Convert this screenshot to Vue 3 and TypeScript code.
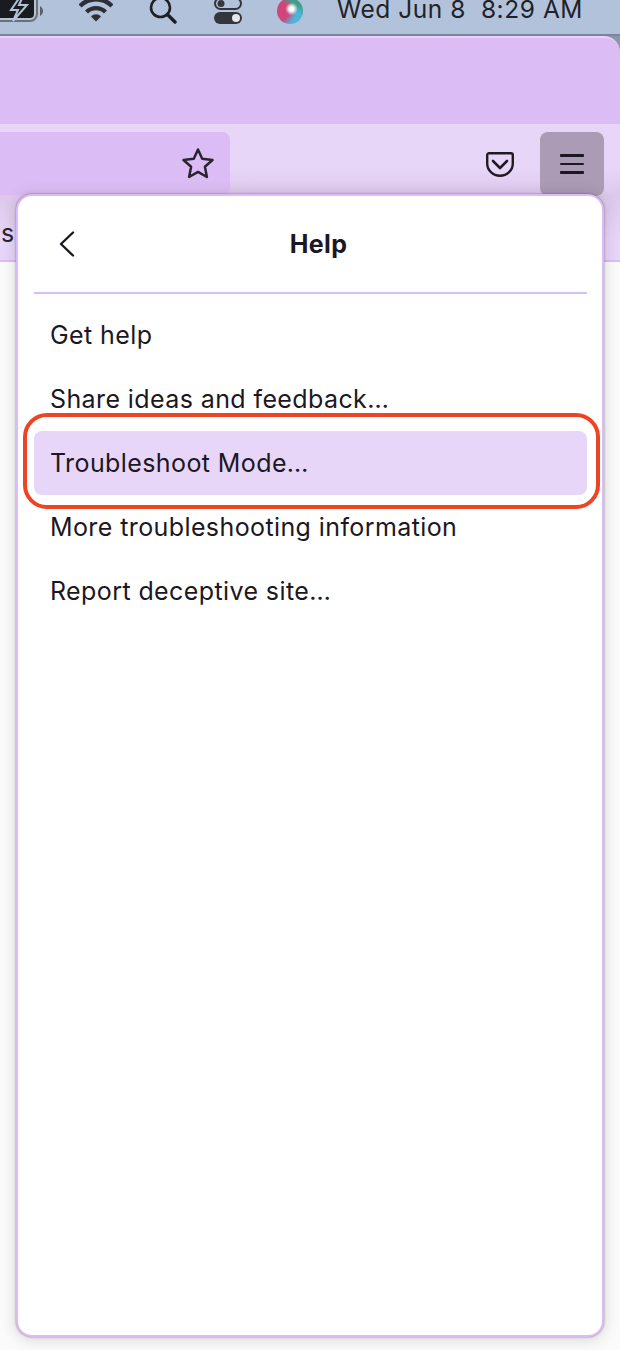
<script setup lang="ts">
// Firefox help panel, cropped from a retina mac screenshot
const items: string[] = [
  'Get help',
  'Share ideas and feedback…',
  'Troubleshoot Mode…',
  'More troubleshooting information',
  'Report deceptive site…',
];
const activeItem = 'Troubleshoot Mode…';
</script>

<template>
  <div class="screen">
    <div class="menubar">
      <svg class="mb-battery" width="44" height="24" viewBox="0 0 44 24">
        <rect x="-20" y="-8" width="57" height="29" rx="7" fill="none" stroke="#6d7176" stroke-width="2" />
        <rect x="-20" y="-5" width="54" height="23" rx="4" fill="#1a1b1f" />
        <path d="M40 6c2 1 3 3 3 5s-1 4-3 5z" fill="#5c6168" />
        <path d="M22 -6 11 10h7l-5 11 14-16h-8l5-11z" fill="#1a1b1f" stroke="#b2c2da" stroke-width="2" />
      </svg>
      <svg class="mb-wifi" width="34" height="22" viewBox="0 0 34 22">
        <path d="M1 6C10 -3 24 -3 33 6" fill="none" stroke="#2c2f35" stroke-width="4.4" />
        <path d="M7.500 12C13 6.800 21 6.800 26.500 12" fill="none" stroke="#2c2f35" stroke-width="4.4" />
        <path d="M12 16.500C15 13.500 19 13.500 22 16.500L17 21.500z" fill="#2c2f35" />
      </svg>
      <svg class="mb-search" width="28" height="24" viewBox="0 0 28 24">
        <circle cx="11.500" cy="7.500" r="9.500" fill="none" stroke="#1d1f24" stroke-width="2.600" />
        <path d="M18.500 14.500 26 22" stroke="#1d1f24" stroke-width="3.400" stroke-linecap="round" />
      </svg>
      <svg class="mb-toggle" width="30" height="25" viewBox="0 0 30 25">
        <rect x="1" y="-2" width="26" height="11" rx="5.500" fill="none" stroke="#33363b" stroke-width="2" />
        <circle cx="7" cy="3.500" r="3.500" fill="#33363b" />
        <rect x="0" y="12" width="28" height="12" rx="6" fill="#33363b" />
        <circle cx="22" cy="18" r="4" fill="#e4e8ee" />
      </svg>
      <div class="mb-siri"></div>
      <span class="mb-clock">Wed Jun 8&nbsp;&nbsp;8:29 AM</span>
    </div>

    <div class="window-top">
      <div class="titlebar"></div>
    </div>

    <div class="toolbar">
      <div class="urlbar">
        <svg width="34" height="34" viewBox="0 0 34 34">
          <path d="M17 2.500 21.200 11.800 31.500 13 23.900 19.800 25.900 30 17 24.900 8.100 30 10.100 19.800 2.500 13 12.800 11.800z" fill="none" stroke="#2b2430" stroke-width="2.500" stroke-linejoin="round" />
        </svg>
      </div>
      <div class="toolbar-right">
        <svg class="pocket" width="28" height="25" viewBox="0 0 28 25">
          <path d="M3 1.200h22a1.800 1.800 0 0 1 1.800 1.800v8.500a12.800 12.300 0 0 1-25.600 0V3A1.800 1.800 0 0 1 3 1.200z" fill="none" stroke="#1f1a24" stroke-width="2.400" />
          <path d="M7 9l7 7 7-7" fill="none" stroke="#1f1a24" stroke-width="2.600" stroke-linecap="round" stroke-linejoin="round" />
        </svg>
        <button class="hamburger" type="button" aria-label="Open menu">
          <span></span><span></span><span></span>
        </button>
      </div>
    </div>

    <div class="bookmarks"><span class="bookmark-text">sl</span></div>
    <div class="page"></div>

    <div class="panel">
      <div class="panel-head">
        <svg class="back" width="18" height="26" viewBox="0 0 18 26">
          <path d="M14 1.500 2 13l12 11.500" fill="none" stroke="#1c1722" stroke-width="2.400" stroke-linecap="round" stroke-linejoin="round" />
        </svg>
        <span class="panel-title">Help</span>
      </div>
      <div class="panel-sep"></div>
      <ul class="panel-list">
        <li v-for="item in items" :key="item" class="panel-item" :class="{ active: item === activeItem }">{{ item }}</li>
      </ul>
    </div>

    <div class="callout"></div>
  </div>
</template>

<style scoped>
.screen {
  position: relative;
  width: 620px;
  height: 1350px;
  overflow: hidden;
  font-family: Inter, "Liberation Sans", sans-serif;
  color: #1c1722;
  background: #f8f8f8;
}
.menubar {
  position: relative;
  height: 34px;
  background: #b2c2da;
  border-bottom: 2px solid #7b8498;
  overflow: hidden;
  display: flex;
  align-items: flex-start;
}
.mb-battery { flex: none; }
.mb-wifi { margin-left: 35px; flex: none; }
.mb-search { margin-left: 36px; flex: none; }
.mb-toggle { margin-left: 37px; flex: none; }
.mb-siri {
  flex: none;
  margin: -2px 0 0 33px;
  width: 26px;
  height: 26px;
  border-radius: 50%;
  background:
    radial-gradient(circle at 56% 42%, #ffffff 0 10%, rgba(255, 255, 255, 0) 30%),
    radial-gradient(circle at 12% 50%, #d0457a 0 32%, rgba(208, 69, 122, 0) 60%),
    radial-gradient(circle at 70% 92%, #4fb4d8 0 30%, rgba(79, 180, 216, 0) 58%),
    radial-gradient(circle at 72% 10%, #3fa08a 0 38%, rgba(63, 160, 138, 0) 66%),
    #4b4a6c;
}
.mb-clock {
  flex: none;
  margin: 0 0 0 34px;
  font-size: 24.500px;
  letter-spacing: 0.55px;
  line-height: 18px;
  color: #1f2228;
  white-space: nowrap;
}
.window-top {
  height: 88px;
  background: #8a96ac;
}
.titlebar {
  height: 100%;
  box-sizing: border-box;
  background: #dcbcf4;
  border-top: 2px solid #e8d2f8;
  border-top-right-radius: 16px;
}
.toolbar {
  height: 71px;
  padding-top: 8px;
  box-sizing: border-box;
  background: linear-gradient(#e8d6f8 0 60%, #dcc8ea 100%);
  display: flex;
  justify-content: space-between;
}
.urlbar {
  width: 230px;
  height: 63px;
  box-sizing: border-box;
  padding: 0 15px 0 0;
  background: #dcbcf4;
  border-radius: 0 8px 8px 0;
  display: flex;
  align-items: center;
  justify-content: flex-end;
}
.toolbar-right {
  display: flex;
  align-items: flex-start;
  margin-right: 16px;
}
.pocket { margin: 20px 26px 0 0; }
.hamburger {
  width: 64px;
  height: 64px;
  padding: 0;
  border: 0;
  border-radius: 8px;
  background: #ab9bb5;
  display: flex;
  flex-direction: column;
  align-items: center;
  justify-content: center;
  gap: 6px;
}
.hamburger span {
  width: 24px;
  height: 2.600px;
  background: #1c1722;
  border-radius: 1px;
}
.bookmarks {
  height: 67px;
  box-sizing: border-box;
  background: linear-gradient(#dcc8ea, #e8d6f8 70%);
  border-bottom: 2px solid #dcbcf4;
  overflow: hidden;
}
.bookmark-text {
  display: block;
  margin: 23px 0 0 1px;
  font-size: 25px;
  letter-spacing: 1px;
  line-height: 30px;
  color: #2b2430;
}
.page {
  height: 1088px;
  background: #fbfbfb;
}
.panel {
  position: absolute;
  left: 16px;
  top: 194px;
  width: 588px;
  height: 1143px;
  box-sizing: border-box;
  padding: 0 15px 0 16px;
  background: #fff;
  border: 2px solid #dcbcf4;
  border-radius: 16px;
  box-shadow: 0 0 2px rgba(60, 40, 70, 0.6), 0 2px 16px rgba(0, 0, 0, 0.16);
}
.panel-head {
  position: relative;
  height: 96px;
  display: flex;
  align-items: center;
  justify-content: center;
}
.back {
  position: absolute;
  left: 25px;
  top: 35px;
}
.panel-title {
  font-size: 25px;
  font-weight: 700;
  letter-spacing: 0.4px;
  margin-left: 16px;
}
.panel-sep {
  height: 2px;
  background: #dcbcf4;
}
.panel-list {
  list-style: none;
  margin: 9px 0 0;
  padding: 0;
}
.panel-item {
  height: 64px;
  padding-left: 16px;
  border-radius: 8px;
  font-size: 25px;
  letter-spacing: 0.4px;
  line-height: 64px;
  white-space: nowrap;
}
.panel-item.active {
  background: #e8d6f8;
}
.callout {
  position: absolute;
  left: 23px;
  top: 413px;
  width: 577px;
  height: 96px;
  box-sizing: border-box;
  border: 4.500px solid #ee4423;
  border-radius: 24px;
}
</style>

<style>
html, body { margin: 0; background: #f8f8f8; }
</style>
